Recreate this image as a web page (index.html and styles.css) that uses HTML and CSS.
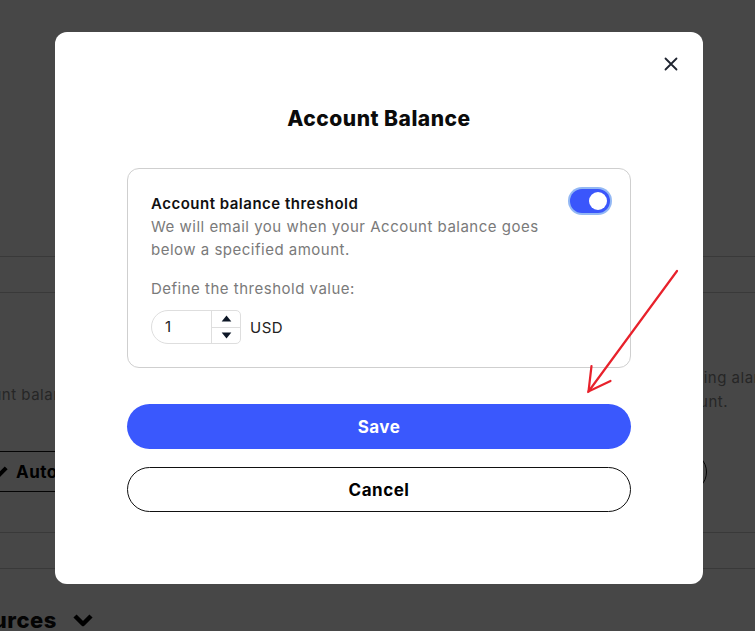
FILE: index.html
```html
<!DOCTYPE html>
<html lang="en">
<head>
    <meta charset="UTF-8">
    <meta name="viewport" content="width=device-width, initial-scale=1.0">
    <title>Account Balance</title>
    <link rel="stylesheet" href="styles.css">
</head>
<body>
    <!-- page behind the dialog -->
    <div class="page">
        <div class="tab-bar"></div>
        <div class="columns">
            <div class="col col-left">
                <p>Account balance alerts keep you informed.</p>
                <button class="ghost-btn ghost-left">
                    <svg class="chev" viewBox="0 0 20 14" width="18" height="13"><path d="M2 3l8 8 8-8" fill="none" stroke="#000" stroke-width="4.5" stroke-linejoin="round"/></svg>
                    Auto top-up
                </button>
            </div>
            <div class="col col-right">
                <p>arning alarm for a low balance<br><span class="second-line">amount.</span></p>
                <button class="ghost-btn ghost-right">Edit alarms</button>
            </div>
        </div>
        <div class="strip"></div>
        <h3 class="section-title">Resources
            <svg class="chev" viewBox="0 0 20 14" width="20" height="14"><path d="M2 3l8 8 8-8" fill="none" stroke="#000" stroke-width="4.5" stroke-linejoin="round"/></svg>
        </h3>
    </div>

    <div class="backdrop">
        <div class="modal">
            <button class="close-btn" aria-label="Close">
                <svg viewBox="0 0 14 14" width="14" height="14"><path d="M1.5 1.5l11 11M12.5 1.5l-11 11" stroke="#1f2430" stroke-width="1.8" stroke-linecap="round"/></svg>
            </button>
            <h2 class="modal-title">Account Balance</h2>

            <div class="threshold-card">
                <div class="card-head">
                    <div>
                        <div class="card-title">Account balance threshold</div>
                        <div class="card-desc">We will email you when your Account balance goes below a specified amount.</div>
                    </div>
                    <label class="toggle">
                        <input type="checkbox" checked>
                        <span class="track"><span class="knob"></span></span>
                    </label>
                </div>
                <div class="field-label">Define the threshold value:</div>
                <div class="amount-row">
                    <div class="number-input">
                        <span class="number-value">1</span>
                        <span class="spinner">
                            <span class="spin-btn"><svg viewBox="0 0 12 8" width="11" height="7"><path d="M6 0.5L11.5 7.5H0.5z" fill="#0d1726"/></svg></span>
                            <span class="spin-btn"><svg viewBox="0 0 12 8" width="11" height="7"><path d="M0.5 0.5H11.5L6 7.5z" fill="#0d1726"/></svg></span>
                        </span>
                    </div>
                    <span class="currency">USD</span>
                </div>
            </div>

            <button class="btn btn-primary">Save</button>
            <button class="btn btn-outline">Cancel</button>
        </div>
    </div>

    <svg class="annotation" viewBox="0 0 755 631" width="755" height="631">
        <g fill="none" stroke="#e8212b" stroke-width="2.2" stroke-linecap="round">
            <path d="M677 271 L588.5 391.5"/>
            <path d="M591.5 366 L588.5 391.5 L610.5 381"/>
        </g>
    </svg>
</body>
</html>
```

FILE: styles.css
```css
body {
    margin: 0;
    height: 631px;
    overflow: hidden;
    background-color: #fff;
    font-family: "Inter", "Liberation Sans", sans-serif;
    letter-spacing: 0.5px;
    color: #111;
}

/* background page */
.page {
    width: 1100px;
    margin-left: -330px;
    padding-top: 256px;
}
.tab-bar {
    height: 35px;
    border-top: 1px solid #ccc;
    border-bottom: 1px solid #ccc;
}
.columns {
    display: grid;
    grid-template-columns: 650px 1fr;
    align-items: start;
}
.col p {
    margin: 0;
    font-size: 15px;
    line-height: 24px;
    color: #8a8a8a;
    white-space: nowrap;
}
.col-left {
    padding-left: 284px;
    padding-top: 90px;
}
.col-right {
    padding-top: 73px;
}
.col-right p {
    margin-left: 359px;
}
.col-right .second-line {
    margin-left: -12px;
}
.ghost-btn {
    display: flex;
    align-items: center;
    height: 41px;
    border: 1px solid #111;
    border-radius: 21px;
    background: #fff;
    font-family: inherit;
    font-size: 17px;
    font-weight: 700;
    letter-spacing: 0.5px;
    color: #000;
    padding: 0 24px;
}
.ghost-left {
    margin-top: 44px;
    margin-left: 5px;
    padding-left: 30px;
    gap: 8px;
}
.ghost-right {
    margin-top: 38px;
    height: 40px;
    width: 420px;
    margin-left: -33px;
    justify-content: center;
}
.strip {
    margin-top: 40px;
    height: 35px;
    border-top: 1px solid #ccc;
    border-bottom: 1px solid #ccc;
}
.section-title {
    margin: 37px 0 0 267px;
    font-size: 22px;
    line-height: 28px;
    font-weight: 800;
    display: flex;
    align-items: center;
    gap: 16px;
}

/* dialog */
.backdrop {
    position: fixed;
    inset: 0;
    background-color: rgba(0, 0, 0, 0.72);
}
.modal {
    position: absolute;
    left: 55px;
    top: 32px;
    width: 648px;
    height: 552px;
    box-sizing: border-box;
    padding: 73px 72px 0;
    background-color: #fff;
    border-radius: 12px;
    display: flex;
    flex-direction: column;
}
.close-btn {
    position: absolute;
    top: 19px;
    right: 19px;
    width: 26px;
    height: 26px;
    border: none;
    background: none;
    padding: 0;
    display: flex;
    align-items: center;
    justify-content: center;
    cursor: pointer;
}
.modal-title {
    margin: 0;
    text-align: center;
    font-size: 21px;
    line-height: 27px;
    font-weight: 800;
    color: #0b0b0b;
}
.threshold-card {
    margin-top: 36px;
    border: 1px solid #cfcfcf;
    border-radius: 12px;
    padding: 23px 20px 24px 23px;
    height: 200px;
    box-sizing: border-box;
}
.card-head {
    display: flex;
    justify-content: space-between;
    align-items: flex-start;
}
.card-title {
    font-size: 15px;
    line-height: 23px;
    font-weight: 600;
    color: #111;
}
.card-desc {
    font-size: 15px;
    line-height: 23px;
    color: #7a7a7a;
    max-width: 405px;
}
.toggle {
    margin-top: -3px;
}
.toggle input {
    display: none;
}
.toggle .track {
    display: block;
    width: 40px;
    height: 24px;
    box-sizing: border-box;
    border-radius: 12px;
    background-color: #3a56fb;
    box-shadow: 0 0 0 2px #93b8f4;
    position: relative;
}
.toggle .knob {
    position: absolute;
    right: 3px;
    top: 3px;
    width: 18px;
    height: 18px;
    border-radius: 50%;
    background-color: #fff;
}
.field-label {
    margin-top: 16px;
    font-size: 15px;
    line-height: 23px;
    color: #7a7a7a;
}
.amount-row {
    margin-top: 10px;
    display: flex;
    align-items: center;
    gap: 9px;
}
.number-input {
    width: 90px;
    height: 34px;
    box-sizing: border-box;
    border: 1px solid #dedede;
    border-radius: 17px 5px 5px 17px;
    display: flex;
}
.number-value {
    flex: 1;
    padding-left: 13px;
    font-size: 15px;
    line-height: 32px;
    color: #222;
}
.spinner {
    width: 28px;
    border-left: 1px solid #dedede;
    display: flex;
    flex-direction: column;
}
.spin-btn {
    flex: 1;
    display: flex;
    align-items: center;
    justify-content: center;
}
.spin-btn + .spin-btn {
    border-top: 1px solid #dedede;
}
.currency {
    font-size: 15px;
    color: #222;
}
.btn {
    width: 100%;
    height: 45px;
    border-radius: 23px;
    font-family: inherit;
    font-size: 17px;
    font-weight: 700;
    letter-spacing: 0.5px;
    cursor: pointer;
}
.btn-primary {
    margin-top: 36px;
    border: none;
    background-color: #3a58fd;
    color: #fff;
}
.btn-outline {
    margin-top: 18px;
    border: 1px solid #111;
    background-color: #fff;
    color: #000;
}

.annotation {
    position: fixed;
    left: 0;
    top: 0;
    pointer-events: none;
}
```
